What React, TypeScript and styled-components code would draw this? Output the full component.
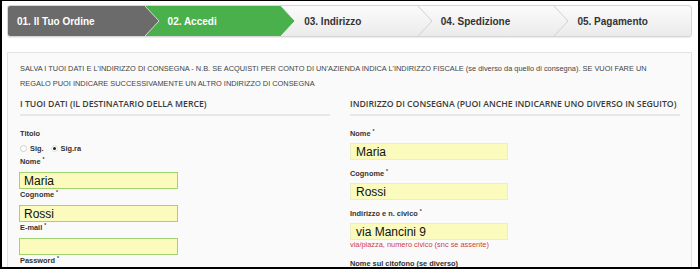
import React from 'react';
import styled, {createGlobalStyle, css} from 'styled-components';

const GlobalStyle = createGlobalStyle`
    html, body {
        margin: 0;
        padding: 0;
        background: #fff;
    }
`;

type StepState = 'done' | 'active' | 'todo';

interface StepProps {
    state: StepState,
    first?: boolean
}

const steps: {label: string, state: StepState}[] = [
    {label: '01. Il Tuo Ordine', state: 'done'},
    {label: '02. Accedi', state: 'active'},
    {label: '03. Indirizzo', state: 'todo'},
    {label: '04. Spedizione', state: 'todo'},
    {label: '05. Pagamento', state: 'todo'},
];

const arrowColors = {
    done: {fill: '#6b6b6b', stroke: '#d9d9d9'},
    active: {fill: '#49b04c', stroke: '#e8f3e8'},
    todo: {fill: 'none', stroke: '#cfcfcf'},
};

const StepArrow = ({state}: {state: StepState}) => {
    const c = arrowColors[state];
    return (
        <ArrowSvg viewBox="0 0 15 31" preserveAspectRatio="none">
            <path d="M0 0 L14 15.5 L0 31" fill={c.fill} stroke={c.stroke} strokeWidth="1"/>
        </ArrowSvg>
    );
};

const Field = ({label, value, required, variant}: {label: string, value?: string, required?: boolean, variant: 'left' | 'right'}) => (
    <FieldRoot variant={variant}>
        <Label>{label}{required && <Req>*</Req>}</Label>
        {value !== undefined && <Input variant={variant} type="text" defaultValue={value}/>}
    </FieldRoot>
);

const App = () => {
    return (
        <Frame>
            <GlobalStyle/>
            <StepsBar>
                {steps.map((s, i) => (
                    <Step key={s.label} state={s.state} first={i === 0}>
                        {s.label}
                        {i < steps.length - 1 && <StepArrow state={s.state}/>}
                    </Step>
                ))}
            </StepsBar>

            <Panel>
                <Intro>
                    SALVA I TUOI DATI E L'INDIRIZZO DI CONSEGNA - N.B. SE ACQUISTI PER CONTO DI UN'AZIENDA INDICA L'INDIRIZZO FISCALE (se diverso da quello di consegna). SE VUOI FARE UN<br/>
                    REGALO PUOI INDICARE SUCCESSIVAMENTE UN ALTRO INDIRIZZO DI CONSEGNA
                </Intro>

                <Columns>
                    <Column>
                        <Heading>I TUOI DATI (IL DESTINATARIO DELLA MERCE)</Heading>
                        <Label>Titolo</Label>
                        <RadioRow>
                            <RadioOption><Radio/>Sig.</RadioOption>
                            <RadioOption><Radio checked/>Sig.ra</RadioOption>
                        </RadioRow>
                        <Field variant="left" label="Nome" required value="Maria"/>
                        <Field variant="left" label="Cognome" required value="Rossi"/>
                        <Field variant="left" label="E-mail" required value=""/>
                        <Field variant="left" label="Password" required/>
                    </Column>

                    <Column>
                        <Heading>INDIRIZZO DI CONSEGNA (PUOI ANCHE INDICARNE UNO DIVERSO IN SEGUITO)</Heading>
                        <Field variant="right" label="Nome" required value="Maria"/>
                        <Field variant="right" label="Cognome" required value="Rossi"/>
                        <FieldRoot variant="right">
                            <Label>Indirizzo e n. civico<Req>*</Req></Label>
                            <Input variant="right" type="text" defaultValue="via Mancini 9"/>
                            <Hint>via/piazza, numero civico (snc se assente)</Hint>
                        </FieldRoot>
                        <Field variant="right" label="Nome sul citofono (se diverso)"/>
                    </Column>
                </Columns>
            </Panel>
        </Frame>
    );
};

export default App;

const Frame = styled.div`
    box-sizing: border-box;
    width: 700px;
    height: 269px;
    overflow: hidden;
    border: 2px solid #000;
    border-top-width: 1px;
    padding: 4px 6px 0 5px;
    font-family: 'Liberation Sans', Arial, sans-serif;
`;

const StepsBar = styled.div`
    box-sizing: border-box;
    display: grid;
    grid-template-columns: repeat(5, 1fr);
    height: 32px;
    border: 1px solid #d6d6d6;
    border-radius: 3px;
    overflow: hidden;
    box-shadow: 0 1px 1px rgba(0, 0, 0, 0.08);
    background: linear-gradient(#fbfbfb, #ebebeb);
`;

const Step = styled.div<StepProps>`
    position: relative;
    display: flex;
    align-items: center;
    padding-left: ${(p) => (p.first ? '9px' : '23px')};
    font-size: 10px;
    font-weight: bold;
    color: #333;
    white-space: nowrap;

    ${(p) => p.state === 'done' && css`
        background: #6b6b6b;
        color: #fff;
    `};

    ${(p) => p.state === 'active' && css`
        background: #49b04c;
        color: #fff;
    `};
`;

const ArrowSvg = styled.svg`
    position: absolute;
    left: 100%;
    top: 0;
    width: 15px;
    height: 100%;
    z-index: 2;
    overflow: visible;
`;

const Panel = styled.div`
    margin-top: 15px;
    border: 1px solid #e3e3e3;
    background: #fafafa;
    padding: 8px 11px 0 12px;
    height: 240px;
`;

const Intro = styled.p`
    margin: 0;
    font-size: 7.4px;
    line-height: 15px;
    color: #444;
    white-space: nowrap;
`;

const Columns = styled.div`
    display: grid;
    grid-template-columns: 310px 1fr;
    column-gap: 20px;
    margin-top: 7px;
`;

const Column = styled.div`
    display: flex;
    flex-direction: column;
    align-items: flex-start;
`;

const Heading = styled.div`
    align-self: stretch;
    font-family: 'Open Sans', 'Liberation Sans', sans-serif;
    font-size: 8.7px;
    font-weight: 600;
    line-height: 12px;
    color: #3a3a3a;
    white-space: nowrap;
    padding-bottom: 4px;
    border-bottom: 2px solid #e8e8e8;
    margin-bottom: 13px;
`;

const Label = styled.div`
    font-size: 7.4px;
    line-height: 10px;
    height: 10px;
    font-weight: bold;
    color: #333;
    white-space: nowrap;
`;

const Req = styled.sup`
    font-size: 5px;
    line-height: 0;
    margin-left: 2px;
    vertical-align: 3px;
`;

const FieldRoot = styled.div<{variant: 'left' | 'right'}>`
    display: flex;
    flex-direction: column;
    align-items: flex-start;
    gap: ${(p) => (p.variant === 'left' ? '5px' : '4px')};
    margin-bottom: ${(p) => (p.variant === 'left' ? '1px' : '9px')};
`;

const Input = styled.input<{variant: 'left' | 'right'}>`
    box-sizing: border-box;
    height: 17px;
    margin: 0 0 0 ${(p) => (p.variant === 'left' ? '-1px' : '0')};
    padding: 0 0 0 ${(p) => (p.variant === 'left' ? '4px' : '5px')};
    font-family: 'Liberation Sans', Arial, sans-serif;
    font-size: 12px;
    color: #111;
    outline: none;
    background: #fafbbd;

    ${(p) => p.variant === 'left' ? css`
        width: 159px;
        border: 1px solid #a3d36f;
    ` : css`
        width: 158px;
        border: 1px solid #ececc8;
    `};
`;

const Hint = styled.div`
    margin-top: -4px;
    font-size: 7.4px;
    line-height: 10px;
    color: #d23a3a;
`;

const RadioRow = styled.div`
    display: flex;
    align-items: center;
    gap: 7px;
    height: 10px;
    margin: 4px 0 4px;
`;

const RadioOption = styled.label`
    display: flex;
    align-items: center;
    gap: 3px;
    font-size: 7.4px;
    font-weight: bold;
    color: #333;
`;

const Radio = styled.span<{checked?: boolean}>`
    box-sizing: border-box;
    display: inline-flex;
    align-items: center;
    justify-content: center;
    width: 7px;
    height: 7px;
    border-radius: 50%;
    border: 1px solid #cfcfcf;
    background: #fff;

    ${(p) => p.checked && css`
        border-color: #e0e0e0;

        &::after {
            content: '';
            width: 3px;
            height: 3px;
            border-radius: 50%;
            background: #222;
        }
    `};
`;
